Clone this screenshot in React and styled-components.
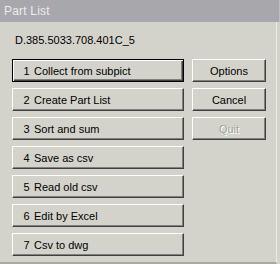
import React from 'react'
import styled, { createGlobalStyle } from 'styled-components'

const Global = createGlobalStyle`
    html, body {
        margin: 0;
        padding: 0;
        background: #d4d3cb;
    }
`

const Window = styled.div`
    width: 280px;
    height: 264px;
    overflow: hidden;
    display: flex;
    flex-direction: column;
    background: #d4d3cb;
    font-family: "Liberation Sans", Arial, sans-serif;
    font-size: 11px;
    color: #000;
`

const TitleBar = styled.div`
    height: 22px;
    flex: none;
    display: flex;
    align-items: center;
    padding-left: 4px;
    background: #a8a7ac;
    border-right: 1px solid #bdbcc0;
    color: #ececec;
    font-size: 12px;
    letter-spacing: 0.2px;
`

const Body = styled.div`
    flex: 1;
    display: flex;
    flex-direction: column;
    padding: 10px 0 0 12px;
    border-right: 1px solid #ecebe6;
    border-bottom: 2px solid #a9a8a3;
    margin-right: 3px;
`

const Label = styled.div`
    height: 17px;
    line-height: 17px;
    padding-left: 3px;
    margin-bottom: 10px;
`

const Columns = styled.div`
    display: flex;
    gap: 8px;
`

const Column = styled.div`
    display: flex;
    flex-direction: column;
    gap: 6px;
    width: ${p => p.width}px;
`

const Button = styled.button`
    box-sizing: border-box;
    height: 23px;
    margin: 0;
    padding: 0 ${p => (p.left ? '6px' : '0')};
    display: flex;
    align-items: center;
    justify-content: ${p => (p.left ? 'flex-start' : 'center')};
    background: #d4d3cb;
    font: inherit;
    color: ${p => (p.disabled ? '#a3a29c' : '#000')};
    text-shadow: ${p => (p.disabled ? '1px 1px 0 #fff' : 'none')};
    border-style: solid;
    border-width: 1px;
    border-color: ${p => (p.primary ? '#000' : '#fff #404040 #404040 #fff')};
    box-shadow: ${p =>
        p.primary
            ? 'inset 1px 1px 0 #fff, inset -1px -1px 0 #404040, inset -2px -2px 0 #808080'
            : 'inset -1px -1px 0 #808080'};
`

const Num = styled.span`
    width: 15px;
    flex: none;
`

const items = [
    'Collect from subpict',
    'Create Part List',
    'Sort and sum',
    'Save as csv',
    'Read old csv',
    'Edit by Excel',
    'Csv to dwg',
]

export default function App() {
    return (
        <Window>
            <Global />
            <TitleBar>Part List</TitleBar>
            <Body>
                <Label>D.385.5033.708.401C_5</Label>
                <Columns>
                    <Column width={172}>
                        {items.map((text, i) => (
                            <Button key={text} left primary={i === 0}>
                                <Num>{i + 1}</Num>
                                {text}
                            </Button>
                        ))}
                    </Column>
                    <Column width={74}>
                        <Button>Options</Button>
                        <Button>Cancel</Button>
                        <Button disabled>Quit</Button>
                    </Column>
                </Columns>
            </Body>
        </Window>
    )
}
